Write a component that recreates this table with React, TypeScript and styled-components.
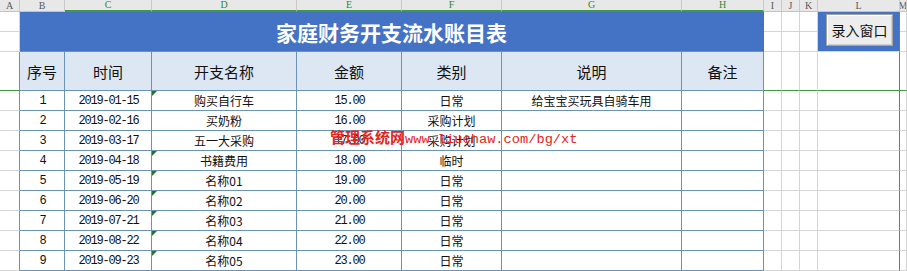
import styled, { createGlobalStyle } from 'styled-components';

const GlobalStyle = createGlobalStyle`
  html, body {
    margin: 0;
    padding: 0;
    background: #ffffff;
    overflow: hidden;
  }
`;

const GRID = '#d4d4d4';
const LINE = '#6b93b6';
const GREEN = '#3f9a45';
const BLUE = '#4472c4';

const Sheet = styled.div`
  position: relative;
  display: grid;
  grid-template-columns: 20px 45px 87px 145px 105px 100px 180px 82px 18px 18px 18px 82px 1fr;
  grid-template-rows: 12px 20px 20px 39px repeat(9, 20px);
  width: 907px;
  height: 271px;
  overflow: hidden;
  font-family: 'Noto Sans CJK SC', 'Noto Sans', sans-serif;
  color: #111;
  & > div {
    box-sizing: border-box;
  }
`;

interface ColHeadProps {
  $selected?: boolean;
}

const ColHead = styled.div<ColHeadProps>`
  display: flex;
  align-items: center;
  justify-content: center;
  background: #e8e8e8;
  border-right: 1px solid #c9c9c9;
  border-bottom: ${(p) => (p.$selected ? `2px solid ${GREEN}` : '1px solid #c3c3c3')};
  font-family: 'Liberation Serif', serif;
  font-size: 10px;
  line-height: 1;
  color: ${(p) => (p.$selected ? '#2f8a36' : '#5a5a5a')};
  overflow: hidden;
`;

interface GridCellProps {
  $right?: string;
  $bottom?: string;
}

const GridCell = styled.div<GridCellProps>`
  background: #ffffff;
  border-right: 1px solid ${(p) => p.$right || GRID};
  border-bottom: 1px solid ${(p) => p.$bottom || GRID};
`;

const TitleCell = styled.div`
  grid-column: span 7;
  grid-row: span 2;
  display: flex;
  align-items: center;
  justify-content: center;
  background: ${BLUE};
  border-right: 1px solid ${BLUE};
  border-bottom: 1px solid ${LINE};
  color: #ffffff;
  font-size: 21px;
  font-weight: 700;
`;

const ButtonCell = styled.div`
  grid-row: span 2;
  display: flex;
  padding: 2px 6px 5px 8px;
  background: ${BLUE};
  border-right: 1px solid ${GREEN};
  border-bottom: 1px solid ${GRID};
`;

const EntryButton = styled.button`
  flex: 1;
  margin: 0;
  padding: 0;
  background: #ededed;
  border: 1px solid #a3a3a3;
  box-shadow: inset 1px 1px #ffffff, inset -1px -1px #cfcfcf;
  font-family: 'Noto Sans CJK SC', sans-serif;
  font-size: 14px;
  color: #111;
`;

const HeadCell = styled.div`
  display: flex;
  align-items: center;
  justify-content: center;
  background: #dde7f3;
  border-right: 1px solid ${LINE};
  border-bottom: 1px solid ${LINE};
  font-size: 15px;
`;

interface DataCellProps {
  $flag?: boolean;
}

const DataCell = styled.div<DataCellProps>`
  position: relative;
  display: flex;
  align-items: center;
  justify-content: center;
  background: #ffffff;
  border-right: 1px solid ${LINE};
  border-bottom: 1px solid ${LINE};
  font-size: 12px;
  white-space: nowrap;

  &::before {
    content: '';
    display: ${(p) => (p.$flag ? 'block' : 'none')};
    position: absolute;
    left: 0;
    top: 0;
    border-top: 5px solid #1f7a26;
    border-right: 5px solid transparent;
  }
`;

const Num = styled.span`
  font-family: 'Liberation Mono', monospace;
  font-size: 12px;
  letter-spacing: -1.2px;
  margin-right: -1.2px;
`;

const Watermark = styled.div`
  position: absolute;
  left: 330px;
  top: 126px;
  display: flex;
  align-items: baseline;
  color: #e0261d;
  white-space: nowrap;
  pointer-events: none;
`;

const MarkName = styled.span`
  font-family: 'Noto Sans CJK SC', sans-serif;
  font-size: 15px;
  font-weight: 700;
`;

const MarkUrl = styled.span`
  font-family: 'Liberation Mono', monospace;
  font-size: 13.7px;
`;

const letters = ['A', 'B', 'C', 'D', 'E', 'F', 'G', 'H', 'I', 'J', 'K', 'L', 'M'];
const selected = ['C', 'D', 'E', 'F', 'G', 'H'];
const headers = ['序号', '时间', '开支名称', '金额', '类别', '说明', '备注'];

const rows = [
  { no: '1', date: '2019-01-15', name: '购买自行车', amount: '15.00', kind: '日常', note: '给宝宝买玩具自骑车用', flag: true },
  { no: '2', date: '2019-02-16', name: '买奶粉', amount: '16.00', kind: '采购计划', note: '', flag: false },
  { no: '3', date: '2019-03-17', name: '五一大采购', amount: '17.00', kind: '采购计划', note: '', flag: false },
  { no: '4', date: '2019-04-18', name: '书籍费用', amount: '18.00', kind: '临时', note: '', flag: true },
  { no: '5', date: '2019-05-19', name: '名称01', amount: '19.00', kind: '日常', note: '', flag: true },
  { no: '6', date: '2019-06-20', name: '名称02', amount: '20.00', kind: '日常', note: '', flag: true },
  { no: '7', date: '2019-07-21', name: '名称03', amount: '21.00', kind: '日常', note: '', flag: true },
  { no: '8', date: '2019-08-22', name: '名称04', amount: '22.00', kind: '日常', note: '', flag: true },
  { no: '9', date: '2019-09-23', name: '名称05', amount: '23.00', kind: '日常', note: '', flag: true },
];

const App = () => {
  return (
    <>
      <GlobalStyle />
      <Sheet>
        {letters.map((l) => (
          <ColHead key={`col${l}`} $selected={selected.includes(l)}>
            {l}
          </ColHead>
        ))}

        {/* rows 1-2: title band and entry button */}
        <GridCell />
        <TitleCell>家庭财务开支流水账目表</TitleCell>
        <GridCell />
        <GridCell />
        <GridCell />
        <ButtonCell>
          <EntryButton>录入窗口</EntryButton>
        </ButtonCell>
        <GridCell />
        <GridCell />
        <GridCell />
        <GridCell />
        <GridCell />
        <GridCell />

        {/* header row */}
        <GridCell $right={LINE} $bottom={GREEN} />
        {headers.map((h) => (
          <HeadCell key={h}>{h}</HeadCell>
        ))}
        <GridCell $bottom={GREEN} />
        <GridCell $bottom={GREEN} />
        <GridCell $bottom={GREEN} />
        <GridCell $right={GREEN} $bottom={GREEN} />
        <GridCell $bottom={GREEN} />

        {rows.map((r) => [
          <GridCell key={`a${r.no}`} $right={LINE} />,
          <DataCell key={`b${r.no}`}>
            <Num>{r.no}</Num>
          </DataCell>,
          <DataCell key={`c${r.no}`}>
            <Num>{r.date}</Num>
          </DataCell>,
          <DataCell key={`d${r.no}`} $flag={r.flag}>
            {r.name}
          </DataCell>,
          <DataCell key={`e${r.no}`}>
            <Num>{r.amount}</Num>
          </DataCell>,
          <DataCell key={`f${r.no}`}>{r.kind}</DataCell>,
          <DataCell key={`g${r.no}`}>{r.note}</DataCell>,
          <DataCell key={`h${r.no}`} />,
          <GridCell key={`i${r.no}`} />,
          <GridCell key={`j${r.no}`} />,
          <GridCell key={`k${r.no}`} />,
          <GridCell key={`l${r.no}`} $right={GREEN} />,
          <GridCell key={`m${r.no}`} />,
        ])}

        <Watermark>
          <MarkName>管理系统网</MarkName>
          <MarkUrl>www.liuchaw.com/bg/xt</MarkUrl>
        </Watermark>
      </Sheet>
    </>
  );
};

export default App;
